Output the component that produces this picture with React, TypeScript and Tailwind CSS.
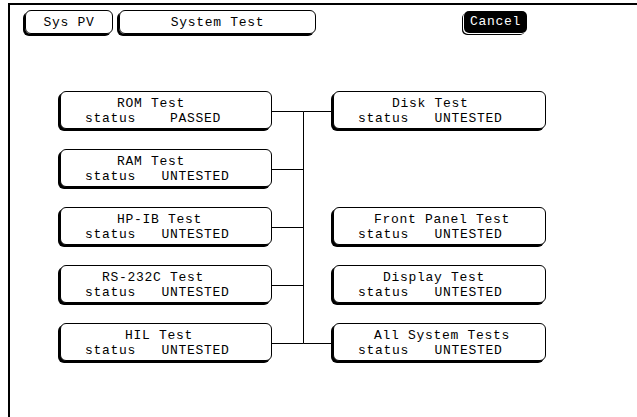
/*
 * System Test screen — HP logic analyzer style menu
 */

const mono = "font-['Liberation_Mono',monospace] text-[13px] tracking-[0.7px] leading-[15px] text-black";

interface TestItem {
  title: string;
  status: string;
  indent: number;
  row: string;
}

const leftTests: TestItem[] = [
  { title: "ROM Test", status: "PASSED", indent: 56, row: "row-start-1" },
  { title: "RAM Test", status: "UNTESTED", indent: 56, row: "row-start-2" },
  { title: "HP-IB Test", status: "UNTESTED", indent: 56, row: "row-start-3" },
  { title: "RS-232C Test", status: "UNTESTED", indent: 41, row: "row-start-4" },
  { title: "HIL Test", status: "UNTESTED", indent: 64, row: "row-start-5" },
];

const rightTests: TestItem[] = [
  { title: "Disk Test", status: "UNTESTED", indent: 58, row: "row-start-1" },
  { title: "Front Panel Test", status: "UNTESTED", indent: 40, row: "row-start-3" },
  { title: "Display Test", status: "UNTESTED", indent: 49, row: "row-start-4" },
  { title: "All System Tests", status: "UNTESTED", indent: 40, row: "row-start-5" },
];

function TestBox({ item, col }: { item: TestItem; col: string }) {
  const gap = item.status === "PASSED" ? "    " : "   ";
  return (
    <div
      className={`${col} ${item.row} h-[38px] border border-black rounded-[6px] shadow-[-2px_2px_0_0_#000] bg-white pt-[4px] ${mono}`}
    >
      <div className="whitespace-pre" style={{ paddingLeft: item.indent }}>
        {item.title}
      </div>
      <div className="whitespace-pre pl-[24px]">
        {"status" + gap + item.status}
      </div>
    </div>
  );
}

function Connectors() {
  const ys = [0, 1, 2, 3, 4].map((i) => 20.5 + i * 58);
  return (
    <svg className="col-start-2 row-start-1 row-span-5" width="61" height="270" viewBox="0 0 61 270">
      {ys.map((y) => (
        <line key={y} x1="0" y1={y} x2="31.5" y2={y} stroke="#000" strokeWidth="1" />
      ))}
      <line x1="31.5" y1={ys[0]} x2="31.5" y2={ys[4]} stroke="#000" strokeWidth="1" />
      <line x1="31.5" y1={ys[0]} x2="61" y2={ys[0]} stroke="#000" strokeWidth="1" />
      <line x1="31.5" y1={ys[4]} x2="61" y2={ys[4]} stroke="#000" strokeWidth="1" />
    </svg>
  );
}

export default function App() {
  return (
    <div className="w-[637px] h-[417px] bg-white overflow-hidden">
      <div className="ml-[8px] mt-[3px] h-[414px] border-l-2 border-t-2 border-black">
        {/* Header buttons */}
        <div className="flex items-start pt-[5px] pl-[15px]">
          <div className={`w-[88px] h-[24px] flex items-center justify-center pt-[1px] border border-black rounded-[6px] shadow-[-2px_2px_0_0_#000] ${mono}`}>
            Sys PV
          </div>
          <div className={`ml-[6px] w-[197px] h-[24px] flex items-center justify-center pt-[1px] border border-black rounded-[6px] shadow-[-2px_2px_0_0_#000] ${mono}`}>
            System Test
          </div>
          <div className="ml-[148px] mt-[1px] w-[63px] h-[22px] flex items-center justify-center bg-black rounded-[5px] shadow-[-1px_1px_0_0_#fff,-2px_2px_0_0_#000] font-['Liberation_Mono',monospace] text-[13px] tracking-[0.7px] text-white">
            Cancel
          </div>
        </div>

        {/* Test grid */}
        <div className="mt-[57px] pl-[50px] grid grid-cols-[212px_61px_213px] grid-rows-[repeat(5,38px)] gap-y-[20px]">
          {leftTests.map((t) => (
            <TestBox key={t.title} item={t} col="col-start-1" />
          ))}
          <Connectors />
          {rightTests.map((t) => (
            <TestBox key={t.title} item={t} col="col-start-3" />
          ))}
        </div>
      </div>
    </div>
  );
}
